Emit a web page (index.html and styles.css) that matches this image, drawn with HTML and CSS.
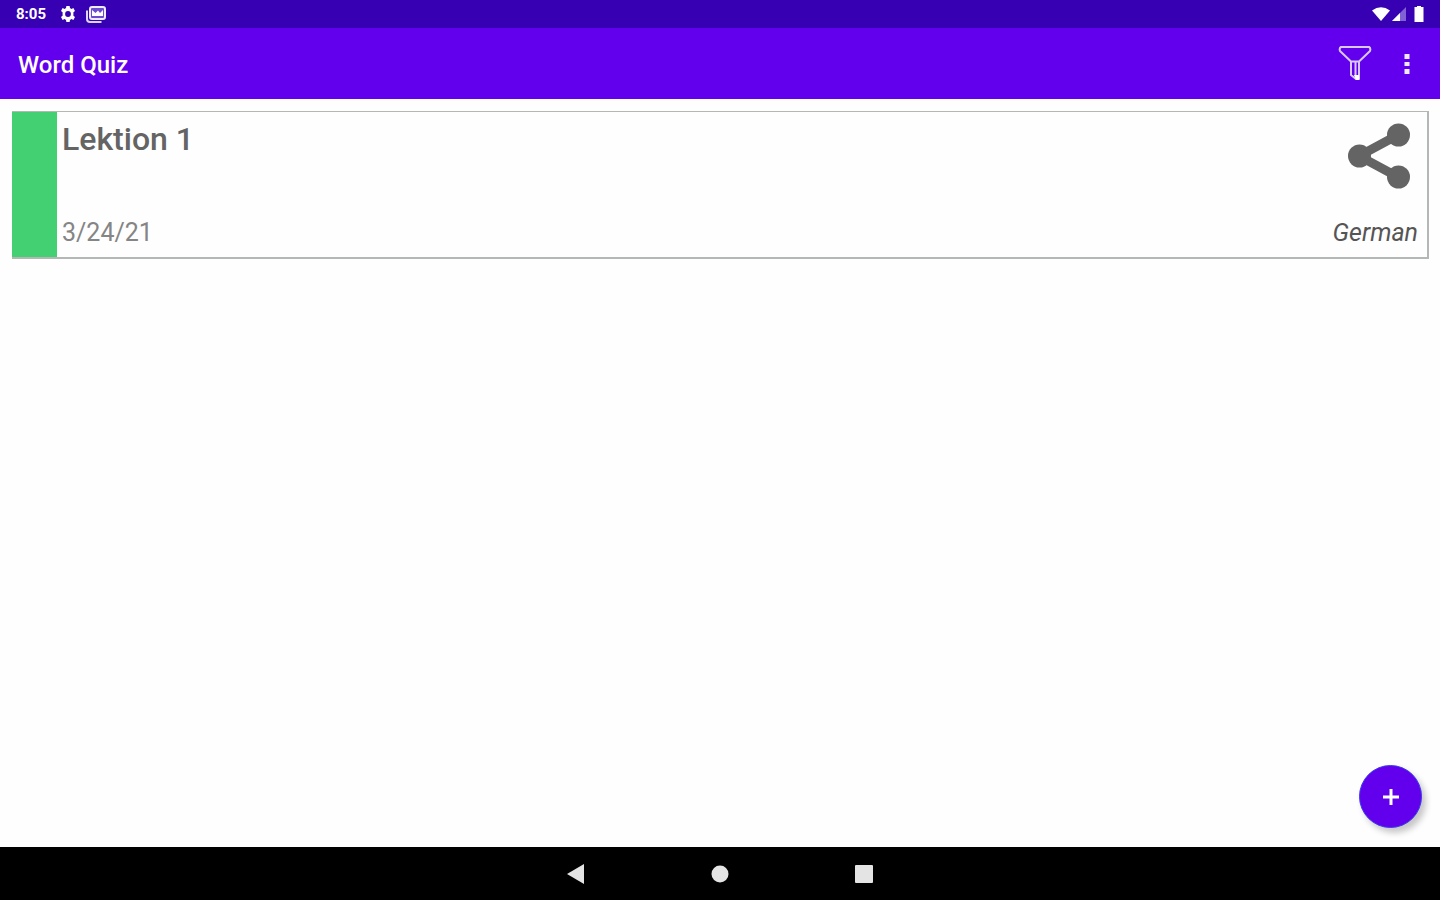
FILE: index.html
```html
<!DOCTYPE html>
<html lang="en">
<head>
<meta charset="utf-8">
<title>Word Quiz</title>
<link rel="stylesheet" href="styles.css">
</head>
<body>
<div class="status">
  <span class="clock">8:05</span>
  <svg class="gear" width="16" height="16" viewBox="0 0 16 16"><path fill="#fff" fill-rule="evenodd" d="M6.4 0h3.2l.4 2.1 1.4.8 2-.8L15 4.900l-1.600 1.300v3.600l1.600 1.300-1.600 2.800-2-.8-1.400.8-.4 2.100H6.400L6 13.900l-1.400-.8-2 .8L1 11.100l1.600-1.300V6.200L1 4.900l1.600-2.800 2 .8L6 2.100zM8 5.100a2.900 2.900 0 1 0 0 5.800 2.900 2.900 0 0 0 0-5.800z"/></svg>
  <svg width="20" height="17" viewBox="0 0 20 17"><path fill="none" stroke="#dcd4fa" stroke-width="2" d="M1 4.500V13a3 3 0 0 0 3 3h11.500"/><rect x="4" y="1" width="15" height="12" rx="2" fill="#6d4bd0" stroke="#eeeaff" stroke-width="2"/><path fill="#fff" d="M6 10V4l3.500 3L12 4.500 14 7l3-3v6z"/></svg>
  <span class="spacer"></span>
  <svg width="18" height="14" viewBox="0 0 18 14"><path fill="#fff" d="M0 3.500Q9-3 18 3.500L9 14z"/></svg>
  <svg class="signal" width="14" height="14" viewBox="0 0 14 14"><path fill="#8062d4" d="M14 0v14H0z"/><path fill="#fff" d="M8 6v8H0z"/></svg>
  <svg width="10" height="16" viewBox="0 0 10 16"><path fill="#fff" d="M3 0h4v1h2.500v15H.5V1H3z"/></svg>
</div>
<header class="appbar">
  <h1 class="title">Word Quiz</h1>
  <button class="icon-btn filter" aria-label="Filter"><svg width="34" height="36" viewBox="0 0 34 36"><path fill="none" stroke="#d9c8ff" stroke-width="2" stroke-linejoin="round" d="M3 1h28q2 1 1 4L21 15.500V33h-3l-5-4V15.500L2 5Q1 2 3 1zM13 15.500h8M17.500 16v14"/><path fill="#fff" d="M16 29h5v5h-3z"/></svg></button>
  <button class="icon-btn" aria-label="More options"><svg width="6" height="20" viewBox="0 0 6 20"><path fill="#f0e9ff" d="M.5 0h5v5h-5zM.5 8h5v4h-5zM.5 15h5v5h-5z"/></svg></button>
</header>
<main class="content">
  <article class="card">
    <div class="stripe"></div>
    <div class="body">
      <h2 class="name">Lektion 1</h2>
      <span class="date">3/24/21</span>
    </div>
    <div class="side">
      <button class="icon-btn share" aria-label="Share"><svg width="64" height="66" viewBox="0 0 64 66"><path fill="none" stroke="#646464" stroke-width="9" d="M51 12 12 33l39 21"/><g fill="#646464"><circle cx="51.500" cy="12" r="11.500"/><circle cx="12.500" cy="33" r="11.500"/><circle cx="51.500" cy="54" r="11.500"/></g></svg></button>
      <span class="language">German</span>
    </div>
  </article>
  <button class="fab" aria-label="Add"><svg width="16" height="16" viewBox="0 0 16 16"><path stroke="#fff" stroke-width="3" d="M8 0v16M0 8h16"/></svg></button>
</main>
<nav class="navbar">
  <button class="icon-btn" aria-label="Back"><svg width="20" height="20" viewBox="0 0 20 20"><path fill="#e4e4e4" d="M1 10 18 0v20z"/></svg></button>
  <button class="icon-btn" aria-label="Home"><svg width="20" height="20" viewBox="0 0 20 20"><circle cx="10" cy="10" r="8.500" fill="#e4e4e4"/></svg></button>
  <button class="icon-btn" aria-label="Recent apps"><svg width="20" height="20" viewBox="0 0 20 20"><rect x="1" y="1" width="18" height="18" rx="1" fill="#e4e4e4"/></svg></button>
</nav>
</body>
</html>
```
FILE: styles.css
```css
* { box-sizing: border-box; }
body {
  margin: 0;
  min-height: 100vh;
  display: flex;
  flex-direction: column;
  background: #fefefe;
  font-family: Roboto, "Liberation Sans", sans-serif;
}
svg { display: block; flex: none; }
h1, h2 { margin: 0; }
.icon-btn {
  display: block;
  padding: 0;
  border: 0;
  background: none;
  cursor: pointer;
}
.status {
  display: flex;
  align-items: center;
  height: 28px;
  padding: 0 16px;
  background: #3700b3;
  color: #fff;
}
.clock {
  width: 44px;
  font-size: 15px;
  font-weight: 700;
}
.gear { margin-right: 10px; }
.spacer { flex: 1; }
.signal { margin: 0 8px 0 2px; }
.appbar {
  display: flex;
  align-items: center;
  height: 71px;
  padding: 0 30px 0 18px;
  background: #6200ee;
  color: #fff;
}
.title {
  flex: 1;
  padding-top: 2px;
  font-size: 24px;
  line-height: 28px;
  font-weight: 500;
}
.filter { margin-right: 32px; }
.content {
  position: relative;
  flex: 1;
  padding: 12px 11px 12px 12px;
}
.card {
  display: flex;
  min-height: 148px;
  border: solid #b4b8b5;
  border-width: 1px 2px 2px 0;
}
.stripe { width: 45px; background: #42d073; }
.body, .side {
  display: flex;
  flex-direction: column;
  justify-content: space-between;
  padding: 9px 5px;
}
.body { flex: 1; }
.side { align-items: flex-end; padding: 11px 9px 9px; }
.share { margin-right: 7px; }
.name {
  font-size: 32px;
  line-height: 36px;
  font-weight: 500;
  color: #646464;
}
.date, .language { font-size: 25px; line-height: 30px; }
.date { color: #858585; }
.language { font-style: italic; color: #555; }
.fab {
  position: absolute;
  right: 18px;
  bottom: 19px;
  width: 63px;
  height: 63px;
  display: grid;
  place-items: center;
  padding: 0;
  border: 1px solid #3b3bec;
  border-radius: 50%;
  background: #6200ee;
  box-shadow: 4px 5px 6px rgba(0, 0, 0, .22);
  cursor: pointer;
}
.navbar {
  display: flex;
  justify-content: center;
  align-items: center;
  gap: 124px;
  height: 53px;
  background: #000;
}
```
